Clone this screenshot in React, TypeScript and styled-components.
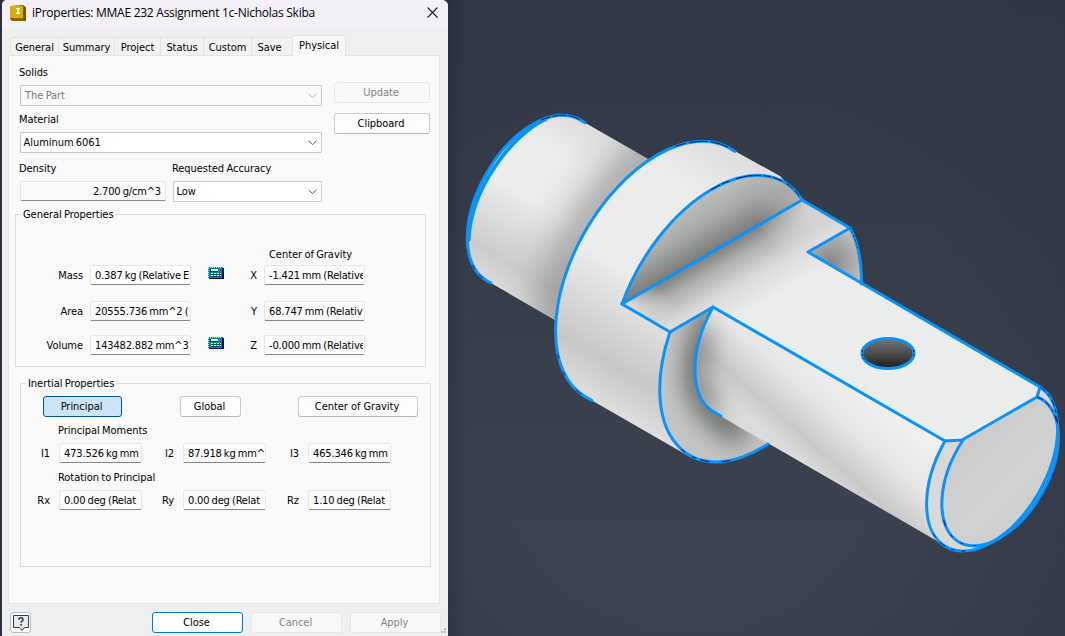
import React from "react";
import styled, { createGlobalStyle } from "styled-components";

const GlobalStyle = createGlobalStyle`
  * { box-sizing: border-box; }
  html, body { margin: 0; height: 100%; overflow: hidden; background: #1c202b; }
`;

const Screen = styled.div`
  display: flex;
  width: 1065px;
  height: 636px;
  padding-left: 2px;
  background: #2c313e;
  font-family: "DejaVu Sans Condensed", "DejaVu Sans", sans-serif;
  font-stretch: condensed;
  font-size: 11px;
  letter-spacing: -0.05px;
  word-spacing: -0.7px;
  color: #000;
`;

const Dialog = styled.div`
  display: flex;
  flex-direction: column;
  width: 446px;
  height: 636px;
  flex: none;
  background: #efefef;
  border-radius: 5px 6px 0 0;
  overflow: hidden;
`;

const TitleBar = styled.header`
  display: flex;
  align-items: center;
  height: 28px;
  flex: none;
  padding: 0 10px 3px 8px;
  background: #f3f0f8;
  font-family: "Open Sans", sans-serif;
  font-stretch: normal;
  font-size: 12px;
  word-spacing: 0;
`;
const TitleText = styled.span`
  flex: 1;
  padding: 0 0 0 6px;
  white-space: nowrap;
  letter-spacing: -0.26px;
`;

const Tabs = styled.nav`
  display: flex;
  align-items: flex-end;
  height: 27px;
  flex: none;
  padding-left: 8px;
`;
const Tab = styled.div<{ $w: number; $active?: boolean; $pad?: number }>`
  position: relative;
  z-index: ${(p) => (p.$active ? 1 : 0)};
  width: ${(p) => p.$w}px;
  height: ${(p) => (p.$active ? 21 : 18)}px;
  margin-bottom: ${(p) => (p.$active ? -1 : 0)}px;
  padding-right: ${(p) => p.$pad ?? 0}px;
  border: 1px solid #e3e3e3;
  border-width: 1px ${(p) => (p.$active ? 1 : 0)}px 0 1px;
  background: ${(p) => (p.$active ? "#f9f9f9" : "#f2f2f2")};
  text-align: center;
  line-height: 19px;
  white-space: nowrap;
`;

const Page = styled.main`
  display: flex;
  flex-direction: column;
  width: 432px;
  height: 549px;
  flex: none;
  margin-left: 6px;
  padding: 9px 9px 0 6px;
  border: 1px solid #e5e5e5;
  background: #f9f9f9;
`;
const Material = styled.section`
  display: flex;
  justify-content: space-between;
  height: 142px;
  flex: none;
  padding-left: 5px;
`;
const Fields = styled.div`
  display: flex;
  flex-direction: column;
  width: 302px;
`;
const Caption = styled.div<{ $h?: number; $top?: number; $indent?: number }>`
  height: ${(p) => p.$h ?? 20}px;
  padding: ${(p) => p.$top ?? 0}px 0 0 ${(p) => p.$indent ?? 0}px;
  margin-left: ${(p) => (p.$indent ? 0 : -1)}px;
  line-height: 16px;
  white-space: nowrap;
`;
const Split = styled.div`
  display: flex;
  gap: 7px;
`;
const SelectBox = styled.div<{ $w: number; $disabled?: boolean }>`
  display: flex;
  align-items: center;
  justify-content: space-between;
  width: ${(p) => p.$w}px;
  height: 21px;
  flex: none;
  padding: 1px 4px 1px ${(p) => (p.$disabled ? 4 : 2.5)}px;
  border: 1px solid #c6c6c6;
  border-radius: 1px;
  background: ${(p) => (p.$disabled ? "#fafafa" : "#fff")};
  color: ${(p) => (p.$disabled ? "#777" : "#000")};
`;
const Side = styled.div`
  display: flex;
  flex-direction: column;
  gap: 10px;
  padding-top: 17px;
`;
const Button = styled.button<{ $w: number; $kind?: "disabled" | "active" | "focus" }>`
  width: ${(p) => p.$w}px;
  height: 21px;
  flex: none;
  padding: 1px 2px 0 0;
  border: 1px solid
    ${(p) => (p.$kind === "disabled" ? "#e6e6e6" : p.$kind === "active" ? "#005499" : p.$kind === "focus" ? "#0078d4" : "#cacaca")};
  border-bottom-color: ${(p) => (p.$kind ? "" : "#b6b6b6")};
  border-radius: 3px;
  background: ${(p) => (p.$kind === "disabled" ? "#f8f8f8" : p.$kind === "active" ? "#cce4f7" : "#fdfdfd")};
  color: ${(p) => (p.$kind === "disabled" ? "#858585" : "#000")};
  font: inherit;
  letter-spacing: inherit;
  line-height: 18px;
  white-space: nowrap;
`;
const Input = styled.div<{ $w: number; $white?: boolean; $right?: boolean }>`
  width: ${(p) => p.$w}px;
  height: 20px;
  flex: none;
  border: 1px solid #e6e6e6;
  border-bottom-color: #868686;
  border-radius: 2px;
  padding: 0 ${(p) => (p.$right ? 4 : 1)}px 0 4px;
  background: ${(p) => (p.$white ? "#fff" : "#fafafa")};
  line-height: 19px;
  text-align: ${(p) => (p.$right ? "right" : "left")};
  letter-spacing: -0.16px;
  word-spacing: -0.8px;
`;
const Clip = styled.div`
  height: 18px;
  overflow: hidden;
  white-space: nowrap;
`;

const Group = styled.fieldset<{ $ml: number; $h: number }>`
  width: 411px;
  height: ${(p) => p.$h}px;
  flex: none;
  margin: 0 0 9px ${(p) => p.$ml}px;
  padding: 0;
  border: 1px solid #dcdcdc;
`;
const Legend = styled.legend`
  height: 14px;
  margin-left: 5px;
  padding: 0 2px;
  line-height: 16px;
  white-space: nowrap;
`;
const Row = styled.div<{ $mb: number }>`
  display: flex;
  align-items: center;
  height: 20px;
  margin-bottom: ${(p) => p.$mb}px;
`;
const RowLabel = styled.div<{ $w: number; $gap: number }>`
  width: ${(p) => p.$w}px;
  flex: none;
  padding-right: ${(p) => p.$gap}px;
  text-align: right;
`;
const IconCell = styled.div`
  width: 49px;
  flex: none;
  padding-left: 17px;
  line-height: 0;
  padding-bottom: 4px;
`;
const Modes = styled.div`
  display: flex;
  align-items: flex-start;
  height: 27px;
  margin: 6px 0 0 22px;
`;
const Gap = styled.span<{ $w: number }>`
  width: ${(p) => p.$w}px;
`;

const Footer = styled.footer`
  display: flex;
  gap: 8px;
  padding: 8px 0 0 8px;
`;
const HelpButton = styled.button`
  width: 21px;
  height: 21px;
  margin-right: 113px;
  padding: 0;
  border: 1px solid #bdbdbd;
  border-radius: 3px;
  background: #fdfdfd;
  line-height: 0;
`;
const Grip = styled.div`
  display: grid;
  grid-template-columns: 2px 2px;
  gap: 1px;
  align-self: flex-end;
  margin-left: -8px;
  i { width: 2px; height: 2px; background: #bbb; }
  i:first-child { grid-column: 2; }
`;

const Viewport = styled.div`
  flex: none;
  width: 617px;
  height: 636px;
  svg { display: block; }
`;

const Chevron = ({ muted }: { muted?: boolean }) => (
  <svg width="9" height="6" viewBox="0 0 9 6" fill="none" stroke={muted ? "#aaa" : "#555"}>
    <path d="M.5 .7 4.5 4.7 8.5 .7" />
  </svg>
);

const Calculator = () => (
  <svg width="16" height="12" viewBox="0 0 16 12" shapeRendering="crispEdges">
    <path d="M0 0h15v11H0z" fill="#008c8c" />
    <path d="M15 1h1v11H1v-1h13V1z" fill="#000070" />
    <path d="M0 .5h14M.5 1v10" stroke="#7ff" strokeDasharray="1 1" />
    <path d="M2 2h8v3H2z" fill="#004050" />
    <path d="M3 2h7v2H3z" fill="#fff" />
    <path d="M3 6.500h10M3 8.500h10" stroke="#fff" strokeDasharray="2 1" />
    <path d="M3 7.500h10M3 9.500h10" stroke="#005058" />
  </svg>
);

const AppIcon = () => (
  <svg width="16" height="16" viewBox="0 0 16 16">
    <path d="M0 1 13 0l3 2v14H2l-2-2z" fill="#8a6500" />
    <path d="M0 1h13v12H0z" fill="#dcae00" />
    <path d="M13 1l3 2v13l-3-3z" fill="#755500" />
    <path d="M6 3h4v1.300H9v3.400h1V9H6V7.700h1V4.300H6z" fill="#fff" />
  </svg>
);

const Help = () => (
  <svg width="17" height="17" viewBox="0 0 17 17">
    <path d="M1.500 1.500h15v12h-4l-2.500 3-2.500-3h-6z" fill="#e9ecef" stroke="#333c46" />
    <path d="M6.800 5.800c0-3 4.400-2.700 4.200-.2-.1 1.500-2 1.500-2 3.200" fill="none" stroke="#30363d" strokeWidth="1.500" />
    <path d="M8.200 10h1.700v1.600H8.200z" fill="#30363d" />
  </svg>
);

const BLUE = "#0893fb";
const SHAFT = "M713 307 945 441A92.700 53.500 -60 0 0 946.500 546.400L714 412A92.700 53.500 -60 0 1 713 307Z";
const STUB = "M579.500 119.500 700 189 600 346 486.500 280.500A92.900 53.600 -60 0 1 579.500 119.500Z";
const DRUM_EDGE = "M728 147.300A143.700 83 -60 0 0 584.200 396.100";
const DRUM = "M728 147.300A143.700 83 -60 0 0 584.200 396.100L689.700 456.800 790 440 850 228 802 200 780 176Z";
const BACK_ARC = "M622 304A143.700 83 -60 0 1 802 200";
const FRONT_ARC = "M670 332A143.700 83 -60 0 0 768 444";
const FRONT_FACE = "M713 307 670 332A143.700 83 -60 0 0 768 444L714 412A92.700 53.500 -60 0 1 713 307Z";
const TOP = "M622 304 802 200 850 228 808 252 1040 387 1037 397 962 440 945 441 713 307 670 332Z";
const EAR_ARC = "M850 228Q862 250 861.500 284";
const EAR = "M808 252 850 228Q862 250 861.500 284Z";
const END_OUTER = "M1040 387A92.700 53.500 -60 1 1 945 441";
const END_INNER = "M1037 397A82.500 47.600 -60 1 1 963 440";

/* Hidden-line dashes: pattern is given in percent of the arc's length. */
const Dashes = ({ d, pattern }: { d: string; pattern: string }) => (
  <path d={d} pathLength={100} strokeDasharray={pattern} />
);

const Model = () => (
  <svg width="617" height="636" viewBox="448 0 617 636">
    <defs>
      <linearGradient id="bg" x1="0" y1="0" x2="0" y2="1">
        <stop offset="0" stopColor="#323845" />
        <stop offset=".5" stopColor="#373e4b" />
        <stop offset="1" stopColor="#3d4352" />
      </linearGradient>
      <radialGradient id="vig" gradientUnits="userSpaceOnUse" cx="690" cy="330" r="520">
        <stop offset=".5" stopColor="#2c3240" stopOpacity="0" />
        <stop offset="1" stopColor="#2c3240" stopOpacity=".6" />
      </radialGradient>
      <linearGradient id="edge" gradientUnits="userSpaceOnUse" x1="448" y1="0" x2="466" y2="0">
        <stop offset="0" stopColor="#1e2330" stopOpacity=".35" />
        <stop offset="1" stopColor="#1e2330" stopOpacity="0" />
      </linearGradient>
      <linearGradient id="stub" gradientUnits="userSpaceOnUse" x1="610" y1="137" x2="517" y2="298">
        <stop offset="0" stopColor="#dededf" />
        <stop offset=".22" stopColor="#ececec" />
        <stop offset=".5" stopColor="#ebeceb" />
        <stop offset=".86" stopColor="#cccccc" />
        <stop offset="1" stopColor="#dadada" />
      </linearGradient>
      <linearGradient id="drum" gradientUnits="userSpaceOnUse" x1="770" y1="171" x2="627" y2="420">
        <stop offset="0" stopColor="#dededf" />
        <stop offset=".2" stopColor="#ececec" />
        <stop offset=".55" stopColor="#ebeceb" />
        <stop offset=".86" stopColor="#c6c7c6" />
        <stop offset="1" stopColor="#dedede" />
      </linearGradient>
      <linearGradient id="shaft" gradientUnits="userSpaceOnUse" x1="865" y1="395" x2="805" y2="464">
        <stop offset="0" stopColor="#efefef" />
        <stop offset=".4" stopColor="#e5e5e5" />
        <stop offset=".78" stopColor="#c9c9c9" />
        <stop offset="1" stopColor="#dbdbdb" />
      </linearGradient>
      <linearGradient id="back" gradientUnits="userSpaceOnUse" x1="690" y1="195" x2="722" y2="250">
        <stop offset="0" stopColor="#c2c3c3" />
        <stop offset=".5" stopColor="#a9abaa" />
        <stop offset="1" stopColor="#747675" />
      </linearGradient>
      <linearGradient id="top" gradientUnits="userSpaceOnUse" x1="712" y1="252" x2="747" y2="312">
        <stop offset="0" stopColor="#7c7d7d" />
        <stop offset=".25" stopColor="#aeafaf" />
        <stop offset=".6" stopColor="#dadada" />
        <stop offset="1" stopColor="#ebecec" />
      </linearGradient>
      <radialGradient id="lit" gradientUnits="userSpaceOnUse" cx="0" cy="0" r="1" gradientTransform="translate(628 306) rotate(30) scale(60 34)">
        <stop offset="0" stopColor="#e0e0e0" />
        <stop offset="1" stopColor="#e0e0e0" stopOpacity="0" />
      </radialGradient>
      <radialGradient id="lit2" gradientUnits="userSpaceOnUse" cx="812" cy="204" r="60">
        <stop offset="0" stopColor="#dedede" stopOpacity=".9" />
        <stop offset="1" stopColor="#dedede" stopOpacity="0" />
      </radialGradient>
      <radialGradient id="lit3" gradientUnits="userSpaceOnUse" cx="802" cy="200" r="50">
        <stop offset="0" stopColor="#bbbcbb" stopOpacity=".9" />
        <stop offset="1" stopColor="#bbbcbb" stopOpacity="0" />
      </radialGradient>
      <radialGradient id="ear" gradientUnits="userSpaceOnUse" cx="830" cy="262" r="36">
        <stop offset="0" stopColor="#858686" />
        <stop offset="1" stopColor="#c0c0c0" />
      </radialGradient>
      <linearGradient id="hole" x1="0" y1="0" x2="0" y2="1">
        <stop offset="0" stopColor="#777" />
        <stop offset=".6" stopColor="#434343" />
        <stop offset="1" stopColor="#1c1c1c" />
      </linearGradient>
      <linearGradient id="face" gradientUnits="userSpaceOnUse" x1="960" y1="440" x2="1040" y2="520">
        <stop offset="0" stopColor="#cbcbcb" />
        <stop offset=".6" stopColor="#d0d2d1" />
        <stop offset="1" stopColor="#cdcdcd" />
      </linearGradient>
      <filter id="soft" filterUnits="userSpaceOnUse" x="448" y="60" width="617" height="520">
        <feGaussianBlur stdDeviation="19" />
      </filter>
      <filter id="soft2" filterUnits="userSpaceOnUse" x="448" y="60" width="617" height="520">
        <feGaussianBlur stdDeviation="13" />
      </filter>
      <clipPath id="cStub"><path d={STUB} /></clipPath>
      <clipPath id="cShaft"><path d={SHAFT} /></clipPath>
      <clipPath id="cFront"><path d={FRONT_FACE} /></clipPath>
    </defs>

    <path d="M448 0h617v636H448z" fill="url(#bg)" />
    <path d="M448 0h617v636H448z" fill="url(#vig)" />
    <path d="M448 0h24v636h-24z" fill="url(#edge)" />

    <path d={STUB} fill="url(#stub)" />
    <g clipPath="url(#cStub)">
      <path d={DRUM_EDGE} fill="none" stroke="#777" strokeWidth="34" filter="url(#soft)" opacity=".75" />
    </g>
    <path d={DRUM} fill="url(#drum)" />
    <path d={EAR} fill="url(#ear)" />
    <path d={BACK_ARC + "Z"} fill="url(#back)" />
    <path d={BACK_ARC + "Z"} fill="url(#lit3)" />
    <path d={FRONT_FACE} fill="#c4c5c5" />
    <g clipPath="url(#cFront)">
      <path d="M716 312C696 350 690 388 714 410L742 436" fill="none" stroke="#5c5e5d" strokeWidth="26" filter="url(#soft2)" />
    </g>
    <path d={SHAFT} fill="url(#shaft)" />
    <g clipPath="url(#cShaft)">
      <path d="M700 330C688 362 690 396 714 412" fill="none" stroke="#777" strokeWidth="28" filter="url(#soft2)" opacity=".85" />
    </g>
    <path d={TOP} fill="url(#top)" />
    <path d="M622 304 682 269 710 320 670 332Z" fill="url(#lit)" />
    <path d="M802 200 850 228 808 252 740 236Z" fill="url(#lit2)" />
    <path d={END_OUTER + "L962 440 1037 397Z"} fill="#d9d9d9" />
    <path d={END_INNER + "Z"} fill="url(#face)" />
    <ellipse cx="888" cy="353.500" rx="26" ry="15" fill="url(#hole)" />

    <g fill="none" stroke={BLUE} strokeWidth="3" strokeLinejoin="round" strokeLinecap="round">
      <path d="M585 122.700 579.500 119.500A92.900 53.600 -60 0 0 486.500 280.500L491 283" />
      <path d="M546 119.500C514 134 471 187 469 240" />
      <path d="M542 121C512 134 470 189 468.500 238" strokeWidth="2.500" />
      <path d="M735 151.500 728 147.300A143.700 83 -60 0 0 584.200 396.100L592 400.500" />
      <path d={BACK_ARC + "Z"} />
      <path d="M622 304 670 332" />
      <path d={FRONT_ARC} />
      <path d="M721 416 714 412A92.700 53.500 -60 0 1 713 307L670 332" />
      <path d="M802 200 850 228 808 252 1040 387 1037 397 962 440 945 441 713 307" />
      <path d={EAR_ARC} />
      <path d={END_OUTER} />
      <path d={END_INNER} />
      <ellipse cx="888" cy="353.500" rx="26" ry="15" />
    </g>
    <g fill="none" stroke="#071b78" strokeWidth="1">
      <Dashes d="M579.500 119.500A92.900 53.600 -60 0 0 486.500 280.500" pattern="5 1 6 1 4 74 2 3 2 100" />
      <Dashes d={DRUM_EDGE} pattern="5 1 5 1 3 71 1 4 1 5 2 100" />
      <Dashes d={BACK_ARC} pattern="0 59 4 1 3 3 10 1 3 1 4 2 3 1 3 100" />
      <Dashes d={FRONT_ARC} pattern="0 57 2 4 2 2 4 6 4 100" />
      <Dashes d={EAR_ARC} pattern="2 5 2 5 3 5 2 5 2 5 2 100" />
      <Dashes d={END_OUTER} pattern="2 1 1 1 2 1 1 1 2 49 1 2 1 2 2 2 1 100" />
      <Dashes d={END_INNER} pattern="2 1 2 1 1 1 2 50 1 3 1 3 1 3 2 100" />
      <path d="M862 350Q862 358 867 362M914 350V357" strokeDasharray="2 2" />
    </g>
  </svg>
);

type GravityRow = { label: string; value: string; editable: boolean; axis: string; pos: string; mb: number };
const GENERAL: GravityRow[] = [
  { label: "Mass", value: "0.387 kg (Relative E", editable: true, axis: "X", pos: "-1.421 mm (Relative", mb: 16 },
  { label: "Area", value: "20555.736 mm^2 (", editable: false, axis: "Y", pos: "68.747 mm (Relativ", mb: 14 },
  { label: "Volume", value: "143482.882 mm^3", editable: true, axis: "Z", pos: "-0.000 mm (Relative", mb: 0 },
];
const MOMENTS = [["I1", "473.526 kg mm"], ["I2", "87.918 kg mm^"], ["I3", "465.346 kg mm"]];
const ROTATION = [["Rx", "0.00 deg (Relat"], ["Ry", "0.00 deg (Relat"], ["Rz", "1.10 deg (Relat"]];

const Triple = ({ items }: { items: string[][] }) => (
  <Row $mb={7}>
    {items.map(([name, value], i) => (
      <React.Fragment key={name}>
        <RowLabel $w={i === 0 ? 38 : i === 1 ? 41 : 42} $gap={9}>{name}</RowLabel>
        <Input $w={83}><Clip>{value}</Clip></Input>
      </React.Fragment>
    ))}
  </Row>
);

export default function App() {
  return (
    <Screen>
      <GlobalStyle />
      <Dialog>
        <TitleBar>
          <AppIcon />
          <TitleText>iProperties: MMAE 232 Assignment 1c-Nicholas Skiba</TitleText>
          <svg width="11" height="11" viewBox="0 0 11 11" stroke="#1b1b1b" strokeWidth="1.100">
            <path d="M.5 .5l10 10M10.500 .5l-10 10" />
          </svg>
        </TitleBar>
        <Tabs>
          <Tab $w={48}>General</Tab>
          <Tab $w={56}>Summary</Tab>
          <Tab $w={46}>Project</Tab>
          <Tab $w={43}>Status</Tab>
          <Tab $w={48}>Custom</Tab>
          <Tab $w={41} $pad={5}>Save</Tab>
          <Tab $w={54} $active>Physical</Tab>
        </Tabs>
        <Page>
          <Material>
            <Fields>
              <Caption>Solids</Caption>
              <SelectBox $w={302} $disabled>The Part<Chevron muted /></SelectBox>
              <Caption $h={26} $top={6}>Material</Caption>
              <SelectBox $w={302}>Aluminum 6061<Chevron /></SelectBox>
              <Split>
                <div>
                  <Caption $h={28} $top={8}>Density</Caption>
                  <Input $w={146} $right>2.700 g/cm^3</Input>
                </div>
                <div>
                  <Caption $h={28} $top={8}>Requested Accuracy</Caption>
                  <SelectBox $w={149}>Low<Chevron /></SelectBox>
                </div>
              </Split>
            </Fields>
            <Side>
              <Button $w={96} $kind="disabled">Update</Button>
              <Button $w={96}>Clipboard</Button>
            </Side>
          </Material>
          <Group $ml={0} $h={160}>
            <Legend>General Properties</Legend>
            <Caption $h={44} $top={26} $indent={253}>Center of Gravity</Caption>
            {GENERAL.map((r) => (
              <Row key={r.label} $mb={r.mb}>
                <RowLabel $w={74} $gap={7}>{r.label}</RowLabel>
                <Input $w={101} $white={r.editable}><Clip>{r.value}</Clip></Input>
                <IconCell>{r.editable && <Calculator />}</IconCell>
                <RowLabel $w={24} $gap={7}>{r.axis}</RowLabel>
                <Input $w={101}><Clip>{r.pos}</Clip></Input>
              </Row>
            ))}
          </Group>
          <Group $ml={5} $h={191}>
            <Legend>Inertial Properties</Legend>
            <Modes>
              <Button $w={79} $kind="active">Principal</Button>
              <Gap $w={58} />
              <Button $w={61}>Global</Button>
              <Gap $w={57} />
              <Button $w={120}>Center of Gravity</Button>
            </Modes>
            <Caption $indent={37}>Principal Moments</Caption>
            <Triple items={MOMENTS} />
            <Caption $indent={37}>Rotation to Principal</Caption>
            <Triple items={ROTATION} />
          </Group>
        </Page>
        <Footer>
          <HelpButton><Help /></HelpButton>
          <Button $w={91} $kind="focus">Close</Button>
          <Button $w={91} $kind="disabled">Cancel</Button>
          <Button $w={91} $kind="disabled">Apply</Button>
          <Grip><i /><i /><i /></Grip>
        </Footer>
      </Dialog>
      <Viewport><Model /></Viewport>
    </Screen>
  );
}
